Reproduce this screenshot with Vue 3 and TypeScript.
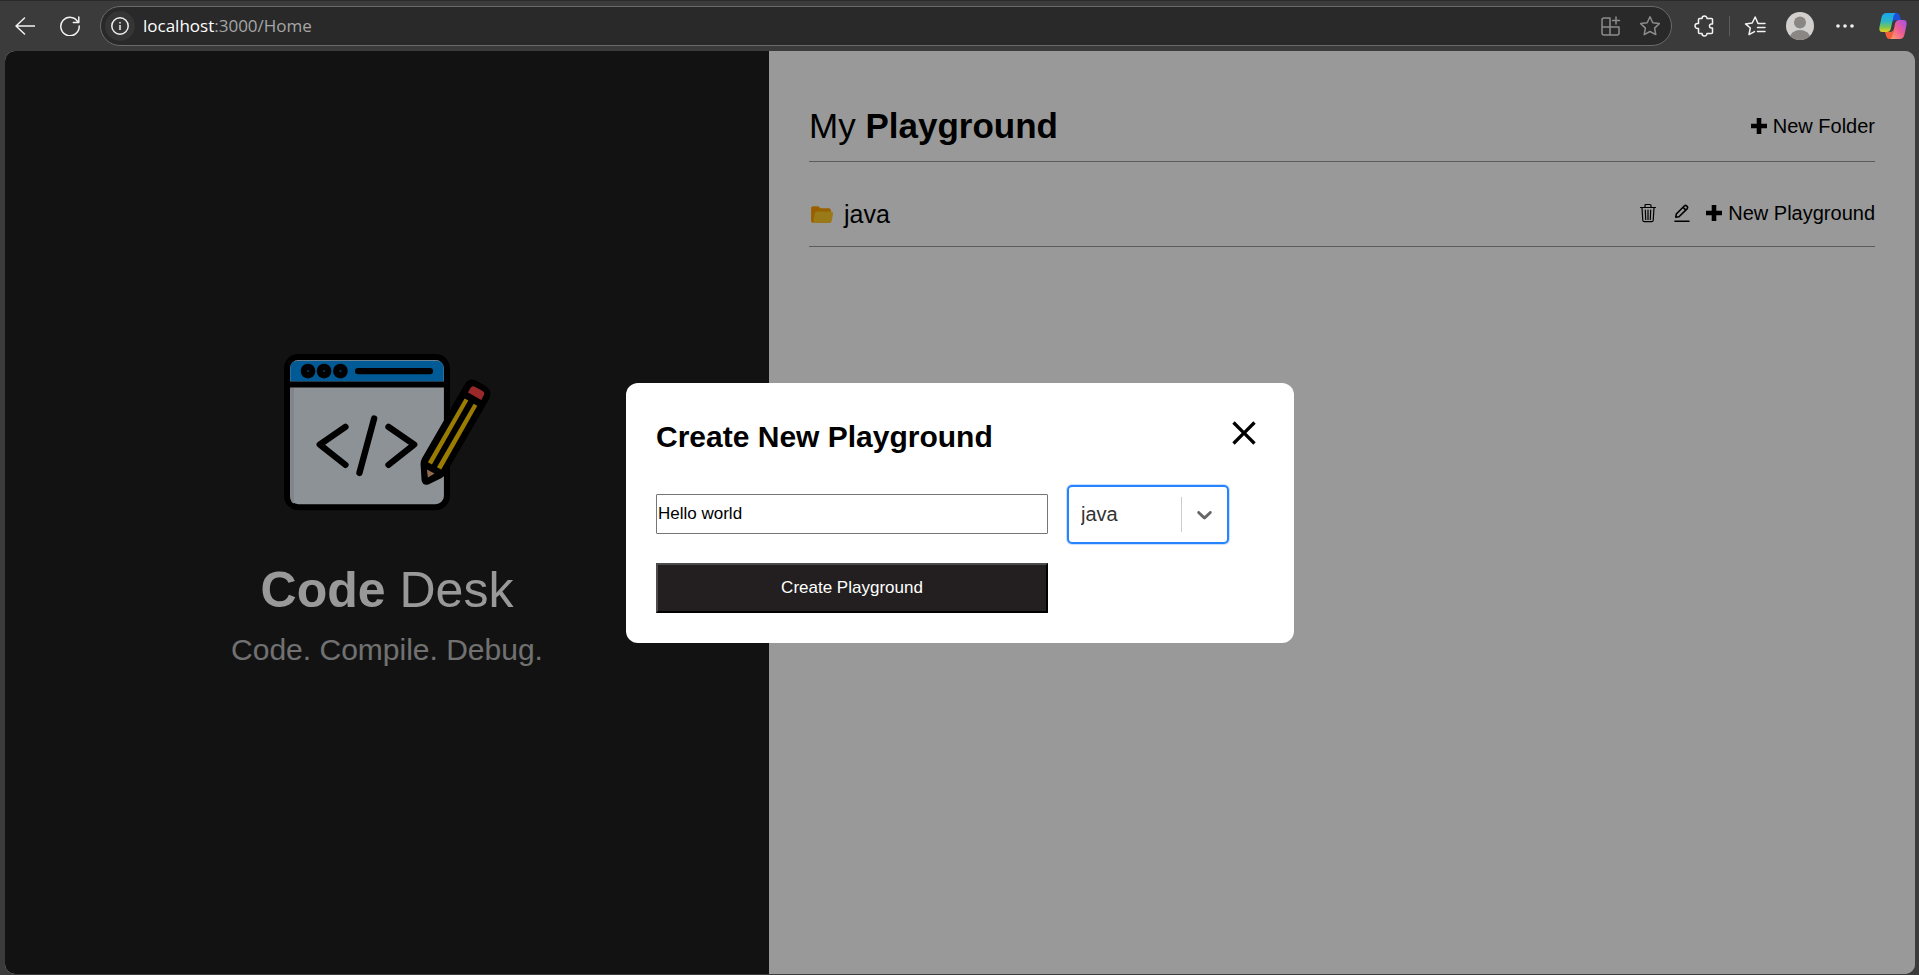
<script setup lang="ts">
import { ref } from 'vue'

interface Folder {
  id: number
  title: string
}

const url = { host: 'localhost', rest: ':3000/Home' }
const folders = ref<Folder[]>([{ id: 1, title: 'java' }])
const languages = ['java', 'cpp', 'python', 'javascript']
const playgroundName = ref('Hello world')
const language = ref('java')
const modalOpen = ref(true)

function createPlayground() {
  modalOpen.value = false
}
</script>

<template>
  <div class="browser">
    <header class="toolbar">
      <button class="tool" type="button" aria-label="Back">
        <svg width="20" height="18" viewBox="0 0 20 18"><path d="M9.500 1 1 9l8.500 8M1 9h19" /></svg>
      </button>
      <button class="tool reload" type="button" aria-label="Reload">
        <svg width="20" height="20" viewBox="0 0 20 20"><path d="M18.300 6.500A9.200 9.200 0 1 0 19.200 10M18.800 1v5.500h-5.500" /></svg>
      </button>
      <div class="address">
        <button class="info" type="button" aria-label="Site information">
          <svg width="18" height="18" viewBox="0 0 18 18"><circle cx="9" cy="9" r="8.200" /><path d="M9 8v5M9 5v1.500" /></svg>
        </button>
        <span class="url">{{ url.host }}<span class="url-rest">{{ url.rest }}</span></span>
        <button class="tool dim" type="button" aria-label="Install app">
          <svg width="20" height="20" viewBox="0 0 20 20"><path d="M9 2H3a2 2 0 0 0-2 2v13a2 2 0 0 0 2 2h13a2 2 0 0 0 2-2v-6H1M9 2v17M15 1v7M11.500 4.500h7" /></svg>
        </button>
        <button class="tool dim" type="button" aria-label="Add to favourites">
          <svg width="22" height="22" viewBox="0 0 22 22"><path d="m11 1.800 2.800 5.900 6.500.9-4.700 4.500 1.200 6.500-5.800-3.100-5.800 3.100 1.200-6.500-4.700-4.500 6.500-.9z" /></svg>
        </button>
      </div>
      <button class="tool puzzle" type="button" aria-label="Extensions">
        <svg width="20" height="22" viewBox="0 0 20 22"><path d="M5.500 3.500H8a2.500 2.500 0 0 1 5 0h4.500q1 0 1 1V9h-1a2 2 0 0 0 0 4h1v4.500q0 1-1 1H13a2.500 2.500 0 0 1-5 0H5.500q-1 0-1-1v-4h-1a2.500 2.500 0 0 1 0-5h1v-4q0-1 1-1z" /></svg>
      </button>
      <span class="bar-divider"></span>
      <button class="tool favs" type="button" aria-label="Favourites">
        <svg width="22" height="22" viewBox="0 0 22 22"><path d="M14 8.500 11.200 2l-3 6-6.700.9L6.300 13 5 19.600l5.500-3M13.500 12.500H21M13.500 16.500H21M14 8.500h7" /></svg>
      </button>
      <button class="tool profile" type="button" aria-label="Profile">
        <svg width="28" height="28" viewBox="0 0 28 28">
          <clipPath id="face"><circle cx="14" cy="14" r="14" /></clipPath>
          <g clip-path="url(#face)"><rect width="28" height="28" fill="#d2d0ce" /><circle cx="14" cy="10.500" r="6" fill="#8a8684" /><ellipse cx="14" cy="25.500" rx="10" ry="7.500" fill="#8a8684" /></g>
        </svg>
      </button>
      <button class="tool more" type="button" aria-label="More">
        <svg width="18" height="4" viewBox="0 0 18 4"><g class="solid"><circle cx="2" cy="2" r="1.800" /><circle cx="9" cy="2" r="1.800" /><circle cx="16" cy="2" r="1.800" /></g></svg>
      </button>
      <button class="tool copilot" type="button" aria-label="Copilot">
        <svg width="28" height="26" viewBox="0 0 28 26">
          <defs>
            <linearGradient id="cool" x1="0" y1="0" x2="0" y2="1"><stop offset="0" stop-color="#19a5ee" /><stop offset=".45" stop-color="#2cb6c4" /><stop offset=".75" stop-color="#7cc653" /><stop offset="1" stop-color="#f0ce1c" /></linearGradient>
            <linearGradient id="warm" x1="1" y1="0" x2="0" y2="1"><stop offset="0" stop-color="#a44df0" /><stop offset=".5" stop-color="#ef5d91" /><stop offset="1" stop-color="#ffa46b" /></linearGradient>
          </defs>
          <path fill="#1b52d8" d="M13 0h4.500c2 0 3 1.500 3.500 3.500l1 3.500h-5c-2 0-3 1-3.500 3z" />
          <path fill="#f2603b" d="M15 26h-4.500c-2 0-3-1.500-3.500-3.500L6 19h5c2 0 3-1 3.500-3z" />
          <path fill="url(#cool)" d="M7.500 0H17c-1.500.5-2.300 2-2.800 4.500L12 15c-.7 3-2 4-4.500 4H3.500C1 19 0 17.500.4 14.500L2.500 4.500C3.200 1.500 4.700 0 7.500 0z" />
          <path fill="url(#warm)" d="M20.500 26H11c1.500-.5 2.300-2 2.800-4.500L16 11c.7-3 2-4 4.500-4h4c2.500 0 3.500 1.500 3.100 4.500l-2.100 10c-.7 3-2.200 4.500-5 4.500z" />
        </svg>
      </button>
    </header>

    <div class="page">
      <aside class="brand">
        <svg class="logo" width="207" height="157" viewBox="72 70 620 470" role="img" aria-label="Code Desk logo">
          <rect x="81" y="79" width="479" height="450" rx="34" fill="#ecf4fb" stroke="#000" stroke-width="18" />
          <path fill="#d8dee8" d="M91 170h11v348q-11-5-11-20z" />
          <path fill="#0096fa" d="M91 152v-38q0-24 24-24h411q24 0 24 24v38z" />
          <path stroke="#000" stroke-width="18" d="M82 161h476" />
          <g><circle cx="144" cy="121" r="22" /><circle cx="192" cy="121" r="22" /><circle cx="241" cy="121" r="22" /></g>
          <g fill="#0070b8"><circle cx="144" cy="121" r="3" /><circle cx="192" cy="121" r="3" /><circle cx="241" cy="121" r="3" /></g>
          <g fill="none" stroke="#000" stroke-width="19" stroke-linecap="round" stroke-linejoin="round">
            <path d="M294 121h215M256 288l-77 53 77 61M342 263l-44 163M385 288l77 53-77 61" />
          </g>
          <path d="M614 160q10-18 30-12l32 18q18 12 13 31l-4 10-129 222q-4 8-12 12l-38 19q-18 6-22-12l-3-49q0-8 4-16z" />
          <path fill="#ff4348" d="m631 171q4-7 11-4l24 13q8 5 5 12l-8 16-40-23z" />
          <path fill="#ffcf00" d="m613 203 11 6-109 192-12-7zM640 219l11 6-108 191-13-7z" />
          <path fill="#f2b27c" d="m500 416 23 12-20 12z" />
        </svg>
        <h1 class="brand-title"><b>Code</b> Desk</h1>
        <p class="tagline">Code. Compile. Debug.</p>
      </aside>

      <main class="workspace">
        <div class="row heading">
          <h2 class="title">My <b>Playground</b></h2>
          <button class="action" type="button">
            <svg width="16" height="16" viewBox="0 0 16 16"><path d="M5.700 0h4.600v5.700H16v4.600h-5.700V16H5.700v-5.700H0V5.700h5.700z" /></svg>New Folder
          </button>
        </div>
        <section v-for="folder in folders" :key="folder.id" class="row folder">
          <h3 class="folder-name">
            <svg width="25" height="25" viewBox="0 0 48 48"><path fill="#ffa000" d="M38 12H22l-4-4H8c-2.200 0-4 1.800-4 4v24c0 2.200 1.800 4 4 4h31c1.700 0 3-1.300 3-3V16c0-2.200-1.800-4-4-4z" /><path fill="#ffca28" d="M42.200 18H15.300c-1.900 0-3.600 1.400-3.900 3.300L8 40h31.700c1.900 0 3.600-1.400 3.900-3.300l2.500-14c.5-2.400-1.400-4.700-3.900-4.700z" /></svg>{{ folder.title }}
          </h3>
          <div class="folder-actions">
            <button class="icon-button" type="button" aria-label="Delete folder">
              <svg width="20" height="20" viewBox="0 0 20 20"><path class="line" d="M2.500 4.500h15M7 4V2.500q0-1 1-1h4q1 0 1 1V4M4 5l.8 12.200q.1 1.500 1.500 1.500h7.400q1.400 0 1.500-1.500L16 5M10 7v9.500M7.300 7l.4 9.500M12.700 7l-.4 9.500" /></svg>
            </button>
            <button class="icon-button" type="button" aria-label="Rename folder">
              <svg width="20" height="20" viewBox="0 0 20 20"><path class="line thick" d="M3 18.200h14M3.800 14.200l.5-3.200 8.200-8.200q1-.8 2 0l.8.800q.8 1 0 2L7 13.800zM11 4.300l2.800 2.800" /></svg>
            </button>
            <button class="action" type="button">
              <svg width="16" height="16" viewBox="0 0 16 16"><path d="M5.700 0h4.600v5.700H16v4.600h-5.700V16H5.700v-5.700H0V5.700h5.700z" /></svg>New Playground
            </button>
          </div>
        </section>
      </main>

      <div v-if="modalOpen" class="overlay">
        <form class="modal" role="dialog" aria-labelledby="modal-title" @submit.prevent="createPlayground">
          <div class="modal-head">
            <h2 id="modal-title" class="modal-title">Create New Playground</h2>
            <button class="close" type="button" aria-label="Close" @click="modalOpen = false">
              <svg width="40" height="40" viewBox="0 0 24 24"><path d="M19 6.410 17.590 5 12 10.590 6.410 5 5 6.410 10.590 12 5 17.590 6.410 19 12 13.410 17.590 19 19 17.590 13.410 12z" /></svg>
            </button>
          </div>
          <div class="fields">
            <input v-model="playgroundName" class="name" type="text" aria-label="Playground name" />
            <div class="picker">
              <select v-model="language" class="select" aria-label="Language">
                <option v-for="item in languages" :key="item" :value="item">{{ item }}</option>
              </select>
              <span class="indicator">
                <svg width="25" height="25" viewBox="0 0 20 20"><path d="M4.516 7.548c.436-.446 1.043-.481 1.576 0L10 11.295l3.908-3.747c.533-.481 1.141-.446 1.574 0 .436.445.408 1.197 0 1.615-.406.418-4.695 4.502-4.695 4.502-.217.223-.502.335-.787.335s-.57-.112-.789-.335c0 0-4.287-4.084-4.695-4.502s-.436-1.170 0-1.615z" /></svg>
              </span>
            </div>
            <button class="submit" type="submit">Create Playground</button>
          </div>
        </form>
      </div>
    </div>
  </div>
</template>

<style>
html,
body {
  margin: 0;
  background: #3b3b3b;
}
</style>

<style scoped>
.browser {
  box-sizing: border-box;
  display: flex;
  flex-direction: column;
  min-height: 100vh;
  padding: 0 4px 1px 5px;
  background: #3b3b3b;
  border-top: 1px solid #2b2b2b;
  font-family: "Liberation Sans", Arial, sans-serif;
}
button {
  display: flex;
  align-items: center;
  justify-content: center;
  padding: 0;
  border: 0;
  background: none;
  font-family: inherit;
  color: inherit;
}
h1,
h2,
h3,
p {
  margin: 0;
  font-weight: 400;
}
svg {
  display: block;
  flex: none;
}

/* Browser toolbar */
.toolbar {
  display: flex;
  align-items: center;
  height: 50px;
  padding: 0 8px 0 10px;
}
.tool svg {
  fill: none;
  stroke: #f2f2f2;
  stroke-width: 1.5;
  stroke-linejoin: round;
  stroke-linecap: round;
}
.tool .solid {
  fill: #f2f2f2;
  stroke: none;
}
.profile svg,
.copilot svg {
  stroke: none;
}
.tool.dim svg {
  stroke: #8c8c8c;
}
.reload {
  margin-left: 25px;
}
.address {
  box-sizing: border-box;
  display: flex;
  flex: 1;
  align-items: center;
  gap: 18px;
  height: 40px;
  margin: 0 22px 0 20px;
  padding: 0 10px 0 4px;
  border: 1px solid #6a6a6a;
  border-radius: 20px;
  background: #292929;
}
.info {
  width: 30px;
  height: 30px;
  border-radius: 50%;
  background: #353535;
}
.info svg {
  fill: none;
  stroke: #f0f0f0;
  stroke-width: 1.5;
}
.url {
  flex: 1;
  margin-left: -10px;
  color: #fff;
  font: 17px/24px "Segoe UI", "Open Sans", sans-serif;
}
.url-rest {
  color: #a6a6a6;
}
.bar-divider {
  width: 1px;
  height: 20px;
  margin: 0 14px 0 15px;
  background: #5c5c5c;
}
.profile {
  margin-left: 20px;
}
.more {
  margin-left: 22px;
}
.copilot {
  margin-left: 25px;
}

/* Page */
.page {
  position: relative;
  display: grid;
  flex: 1;
  grid-template-columns: 2fr 3fr;
  overflow: hidden;
  border-radius: 10px;
  background: #fff;
}
.brand {
  display: flex;
  flex-direction: column;
  align-items: center;
  justify-content: center;
  padding-bottom: 5px;
  background: #1e1e1e;
  color: #fff;
}
.brand-title {
  margin-top: 50px;
  font-size: 50px;
  line-height: 58px;
}
.tagline {
  margin-top: 14px;
  font-size: 30px;
  line-height: 34px;
  opacity: 0.7;
}
.workspace {
  padding: 55px 40px 40px;
  color: #000;
}
.row {
  display: flex;
  align-items: center;
  justify-content: space-between;
  border-bottom: 1px solid #989898;
}
.heading {
  padding-bottom: 15px;
}
.folder {
  align-items: flex-start;
  padding: 38px 0 17px;
}
.title {
  font-size: 35px;
  line-height: 40px;
}
.action {
  gap: 6px;
  font-size: 20px;
  line-height: 24px;
}
.folder-name {
  display: flex;
  align-items: center;
  gap: 10px;
  font-size: 25px;
  line-height: 29px;
}
.folder-actions {
  display: flex;
  align-items: center;
  gap: 14px;
  padding-top: 1px;
}
.line {
  fill: none;
  stroke: #000;
  stroke-width: 1.2;
  stroke-linecap: round;
  stroke-linejoin: round;
}
.thick {
  stroke-width: 1.6;
}

/* Dialog */
.overlay {
  position: absolute;
  inset: 0;
  display: flex;
  align-items: center;
  justify-content: center;
  background: rgba(0, 0, 0, 0.4);
}
.modal {
  box-sizing: border-box;
  width: 668px;
  max-width: 100%;
  padding: 30px;
  border-radius: 12px;
  background: #fff;
  color: #000;
}
.modal-head {
  display: flex;
  align-items: flex-end;
  justify-content: space-between;
  margin-bottom: 32px;
}
.modal-title {
  font-size: 30px;
  font-weight: 700;
  line-height: 32px;
}
.fields {
  display: grid;
  grid-template-columns: 392px 162px;
  align-items: center;
  gap: 19px;
}
.name {
  box-sizing: border-box;
  width: 100%;
  height: 40px;
  padding: 1px;
  border: 1px solid #767676;
  border-radius: 1px;
  background: #fff;
  color: #000;
  font-family: inherit;
  font-size: 17px;
}
.picker {
  position: relative;
}
.select {
  box-sizing: border-box;
  display: block;
  width: 100%;
  height: 59px;
  padding: 0 48px 0 12px;
  border: 2px solid #2684ff;
  border-radius: 5px;
  box-shadow: 0 0 0 1px rgba(38, 132, 255, 0.25);
  appearance: none;
  background: #fff;
  color: #333;
  font-family: inherit;
  font-size: 20px;
}
.indicator {
  position: absolute;
  inset: 12px 2px 12px auto;
  display: flex;
  align-items: center;
  padding: 0 10px;
  border-left: 1px solid #ccc;
  fill: #666;
  pointer-events: none;
}
.submit {
  height: 50px;
  border: 2px outset #000;
  border-color: #4c4c4c #000 #000 #4c4c4c;
  background: #231f20;
  color: #fff;
  font-size: 17px;
}
</style>
